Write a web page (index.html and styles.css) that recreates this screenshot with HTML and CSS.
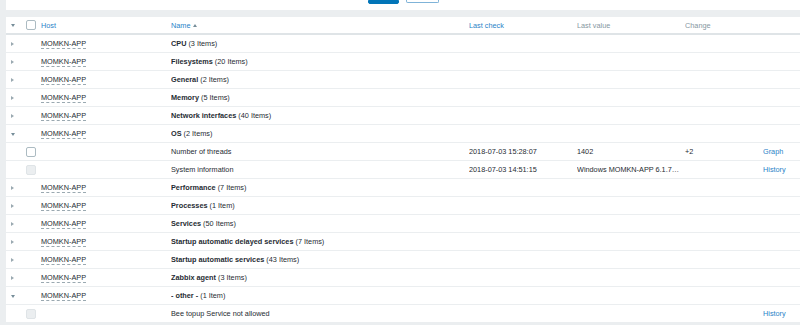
FILE: index.html
```html
<!DOCTYPE html>
<html lang="en">
<head>
  <meta charset="UTF-8" />
  <title>Latest data</title>
  <link rel="stylesheet" href="styles.css">
</head>
<body>
  <div class="filter">
    <div class="filter-buttons">
      <button class="btn-apply" title="Apply"></button>
      <button class="btn-reset" title="Reset"></button>
    </div>
  </div>

  <div class="list">
    <table class="items">
      <colgroup>
        <col class="c-toggle" />
        <col class="c-check" />
        <col class="c-host" />
        <col class="c-name" />
        <col class="c-clock" />
        <col class="c-value" />
        <col class="c-change" />
        <col class="c-link" />
      </colgroup>
      <thead>
        <tr>
          <th><span class="arrow open"></span></th>
          <th><span class="check"></span></th>
          <th><a class="sort" href="#">Host</a></th>
          <th><a class="sort" href="#">Name</a><span class="sort-up"></span></th>
          <th><a class="sort" href="#">Last check</a></th>
          <th>Last value</th>
          <th>Change</th>
          <th></th>
        </tr>
      </thead>
      <tbody>
        <tr>
          <td><span class="arrow"></span></td><td></td>
          <td><span class="host">MOMKN-APP</span></td>
          <td><b>CPU</b> (3 Items)</td><td></td><td></td><td></td><td></td>
        </tr>
        <tr>
          <td><span class="arrow"></span></td><td></td>
          <td><span class="host">MOMKN-APP</span></td>
          <td><b>Filesystems</b> (20 Items)</td><td></td><td></td><td></td><td></td>
        </tr>
        <tr>
          <td><span class="arrow"></span></td><td></td>
          <td><span class="host">MOMKN-APP</span></td>
          <td><b>General</b> (2 Items)</td><td></td><td></td><td></td><td></td>
        </tr>
        <tr>
          <td><span class="arrow"></span></td><td></td>
          <td><span class="host">MOMKN-APP</span></td>
          <td><b>Memory</b> (5 Items)</td><td></td><td></td><td></td><td></td>
        </tr>
        <tr>
          <td><span class="arrow"></span></td><td></td>
          <td><span class="host">MOMKN-APP</span></td>
          <td><b>Network interfaces</b> (40 Items)</td><td></td><td></td><td></td><td></td>
        </tr>
        <tr>
          <td><span class="arrow open"></span></td><td></td>
          <td><span class="host">MOMKN-APP</span></td>
          <td><b>OS</b> (2 Items)</td><td></td><td></td><td></td><td></td>
        </tr>
        <tr>
          <td></td><td><span class="check"></span></td><td></td>
          <td>Number of threads</td>
          <td>2018-07-03 15:28:07</td>
          <td>1402</td>
          <td>+2</td>
          <td><a href="#">Graph</a></td>
        </tr>
        <tr>
          <td></td><td><span class="check off"></span></td><td></td>
          <td>System information</td>
          <td>2018-07-03 14:51:15</td>
          <td>Windows MOMKN-APP 6.1.7…</td>
          <td></td>
          <td><a href="#">History</a></td>
        </tr>
        <tr>
          <td><span class="arrow"></span></td><td></td>
          <td><span class="host">MOMKN-APP</span></td>
          <td><b>Performance</b> (7 Items)</td><td></td><td></td><td></td><td></td>
        </tr>
        <tr>
          <td><span class="arrow"></span></td><td></td>
          <td><span class="host">MOMKN-APP</span></td>
          <td><b>Processes</b> (1 Item)</td><td></td><td></td><td></td><td></td>
        </tr>
        <tr>
          <td><span class="arrow"></span></td><td></td>
          <td><span class="host">MOMKN-APP</span></td>
          <td><b>Services</b> (50 Items)</td><td></td><td></td><td></td><td></td>
        </tr>
        <tr>
          <td><span class="arrow"></span></td><td></td>
          <td><span class="host">MOMKN-APP</span></td>
          <td><b>Startup automatic delayed services</b> (7 Items)</td><td></td><td></td><td></td><td></td>
        </tr>
        <tr>
          <td><span class="arrow"></span></td><td></td>
          <td><span class="host">MOMKN-APP</span></td>
          <td><b>Startup automatic services</b> (43 Items)</td><td></td><td></td><td></td><td></td>
        </tr>
        <tr>
          <td><span class="arrow"></span></td><td></td>
          <td><span class="host">MOMKN-APP</span></td>
          <td><b>Zabbix agent</b> (3 Items)</td><td></td><td></td><td></td><td></td>
        </tr>
        <tr>
          <td><span class="arrow open"></span></td><td></td>
          <td><span class="host">MOMKN-APP</span></td>
          <td><b>- other -</b> (1 Item)</td><td></td><td></td><td></td><td></td>
        </tr>
        <tr>
          <td></td><td><span class="check off"></span></td><td></td>
          <td>Bee topup Service not allowed</td>
          <td></td><td></td><td></td>
          <td><a href="#">History</a></td>
        </tr>
      </tbody>
    </table>
  </div>
</body>
</html>
```

FILE: styles.css
```css
body {
  margin: 0;
  padding-left: 6px;
  background: #ebeef0;
  font-family: 'Liberation Sans', Arial, sans-serif;
  font-size: 7.3px;
  color: #1f2c33;
  overflow: hidden;
}

a {
  color: #2a83c8;
  text-decoration: none;
}

/* filter panel, cut off at the top */
.filter {
  background: #ffffff;
  height: 10px;
}

.filter-buttons {
  display: flex;
  justify-content: center;
  align-items: flex-start;
  gap: 7px;
}

.filter-buttons button {
  padding: 0;
  border-radius: 0 0 2px 2px;
}

.btn-apply {
  width: 31px;
  height: 4px;
  background: #0275b8;
  border: 1px solid #0275b8;
}

.btn-reset {
  width: 33px;
  height: 3px;
  background: #ffffff;
  border: 1px solid #7fb3d8;
  border-top: none;
}

.list {
  margin-top: 7px;
  background: #ffffff;
}

.items {
  width: 100%;
  border-collapse: collapse;
  table-layout: fixed;
}

.c-toggle { width: 16px; }
.c-check { width: 19px; }
.c-host { width: 130px; }
.c-name { width: 298px; }
.c-clock { width: 108px; }
.c-value { width: 108px; }
.c-change { width: 78px; }

.items th,
.items td {
  padding: 0;
  text-align: left;
  white-space: nowrap;
  overflow: hidden;
  vertical-align: middle;
}

.items th {
  height: 16px;
  font-weight: normal;
  color: #86979f;
  border-bottom: 2px solid #dfe4e7;
}

.items td {
  height: 17px;
  border-bottom: 1px solid #ebeef0;
}

.items tbody tr:last-child td {
  border-bottom: none;
}

.items th:first-child,
.items td:first-child {
  padding-left: 5px;
}

.items th:nth-child(2),
.items td:nth-child(2) {
  padding-left: 4px;
}

.items a.sort {
  color: #2a83c8;
}

.sort-up {
  display: inline-block;
  margin-left: 3px;
  border-left: 2px solid transparent;
  border-right: 2px solid transparent;
  border-bottom: 3px solid #768d99;
  vertical-align: 1px;
}

.items b {
  font-weight: bold;
}

.host {
  border-bottom: 1px dashed #9aa9b1;
}

.arrow {
  display: inline-block;
  width: 0;
  height: 0;
  border-top: 2px solid transparent;
  border-bottom: 2px solid transparent;
  border-left: 3px solid #9aa9b1;
  vertical-align: middle;
}

.arrow.open {
  border-left: 2px solid transparent;
  border-right: 2px solid transparent;
  border-top: 3px solid #768d99;
  border-bottom: none;
}

.check {
  display: block;
  width: 10px;
  height: 10px;
  box-sizing: border-box;
  border: 1px solid #acbbc2;
  border-radius: 2px;
  background: #ffffff;
}

.check.off {
  background: #ebeef0;
  border-color: #dfe4e7;
}
```
